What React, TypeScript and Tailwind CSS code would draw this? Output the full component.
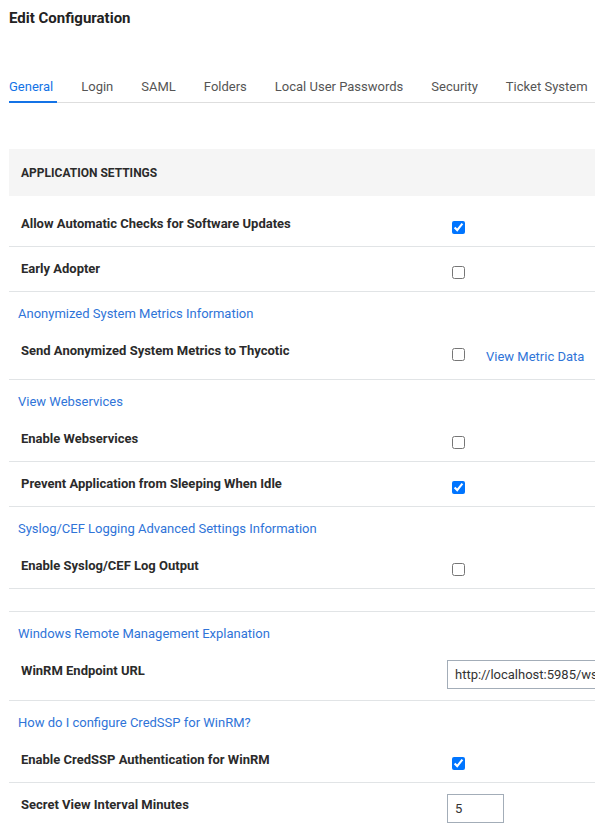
import React from "react";

const tabs = ["General", "Login", "SAML", "Folders", "Local User Passwords", "Security", "Ticket System"];

function LinkRow({ text }: { text: string }) {
  return (
    <div className="h-[37px] pt-[12px] pl-[9px] text-[13px] leading-[20px] text-[#2f74d8]">
      <a href="#">{text}</a>
    </div>
  );
}

function Row({
  label,
  h = "h-[45px]",
  children,
}: {
  label?: string;
  h?: string;
  children?: React.ReactNode;
}) {
  return (
    <div className={`flex border-b border-[#e1e4e6] box-border ${h}`}>
      <div className="w-[438px] shrink-0 pt-[12px] pl-[12px] text-[13px] leading-[20px] font-bold text-[#2b2b2b]">
        {label}
      </div>
      <div className="flex items-start whitespace-nowrap">{children}</div>
    </div>
  );
}

function Check({ on }: { on?: boolean }) {
  return (
    <div className="pt-[19px] pl-[5px] flex">
      <input type="checkbox" defaultChecked={on} className="m-0 w-[13px] h-[13px]" />
    </div>
  );
}

export default function App() {
  return (
    <div className="w-[595px] h-[824px] overflow-hidden bg-white font-['Roboto',sans-serif] pl-[9px]">
      {/* Title */}
      <h1 className="pt-[9px] text-[15px] leading-[18px] font-bold text-[#222]">Edit Configuration</h1>

      {/* Tabs */}
      <div className="mt-[50px] flex gap-[24px] border-b border-[#dedede] whitespace-nowrap">
        {tabs.map((t, i) => (
          <div
            key={t}
            className={
              i === 0
                ? "-mb-px pb-[4px] pr-[4px] border-b-2 border-[#1473e6] text-[13px] leading-[20px] text-[#1473e6]"
                : "-mb-px pb-[4px] pr-[4px] border-b-2 border-transparent text-[13px] leading-[20px] text-[#555]"
            }
          >
            {t}
          </div>
        ))}
      </div>

      {/* Section header */}
      <div className="mt-[46px] h-[47px] bg-[#f5f5f5] flex items-center pl-[12px] text-[12px] font-bold text-[#2b2b2b] uppercase">
        Application Settings
      </div>

      <div className="mt-[6px]">
        <Row label="Allow Automatic Checks for Software Updates">
          <Check on />
        </Row>
        <Row label="Early Adopter">
          <Check />
        </Row>
        <LinkRow text="Anonymized System Metrics Information" />
        <Row label="Send Anonymized System Metrics to Thycotic" h="h-[51px]">
          <Check />
          <a href="#" className="pt-[18px] ml-[21px] text-[13px] leading-[20px] text-[#2f74d8]">
            View Metric Data
          </a>
        </Row>
        <LinkRow text="View Webservices" />
        <Row label="Enable Webservices">
          <Check />
        </Row>
        <Row label="Prevent Application from Sleeping When Idle">
          <Check on />
        </Row>
        <LinkRow text="Syslog/CEF Logging Advanced Settings Information" />
        <Row label="Enable Syslog/CEF Log Output">
          <Check />
        </Row>
        <Row h="h-[23px]" />
        <LinkRow text="Windows Remote Management Explanation" />
        <Row label="WinRM Endpoint URL" h="h-[52px]">
          <div className="pt-[11px]">
            <input
              type="text"
              defaultValue="http://localhost:5985/wsman"
              className="w-[200px] h-[29px] border border-[#a3adb8] px-[7px] text-[13px] text-[#333] outline-none"
            />
          </div>
        </Row>
        <LinkRow text="How do I configure CredSSP for WinRM?" />
        <Row label="Enable CredSSP Authentication for WinRM">
          <Check on />
        </Row>
        <Row label="Secret View Interval Minutes">
          <div className="pt-[11px]">
            <input
              type="text"
              defaultValue="5"
              className="w-[57px] h-[29px] border border-[#a3adb8] px-[7px] text-[13px] text-[#333] outline-none"
            />
          </div>
        </Row>
      </div>
    </div>
  );
}
